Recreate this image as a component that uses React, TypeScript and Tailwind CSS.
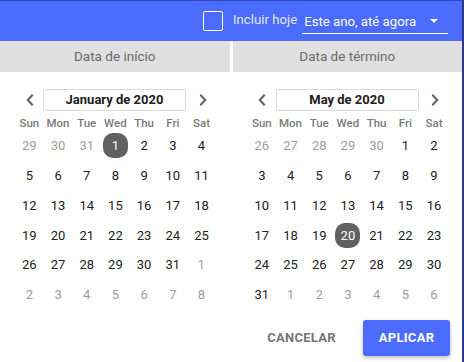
import React from "react";

function Chevron({ dir }: { dir: "l" | "r" }) {
  return (
    <svg width="10" height="12" viewBox="0 0 10 12" fill="none">
      <path
        d={dir === "l" ? "M7 1.5 L2.8 6 L7 10.5" : "M3 1.5 L7.2 6 L3 10.5"}
        stroke="#616161"
        strokeWidth="2"
        strokeLinecap="square"
      />
    </svg>
  );
}

type Day = { n: number; cur: boolean; sel?: boolean };

function Calendar({ title, days }: { title: string; days: Day[] }) {
  const weeks: Day[][] = [];
  for (let i = 0; i < days.length; i += 7) weeks.push(days.slice(i, i + 7));
  const names = ["Sun", "Mon", "Tue", "Wed", "Thu", "Fri", "Sat"];
  return (
    <div className="pl-[15px] pt-[17px]">
      <div className="flex h-[22px] items-center">
        <div className="flex w-[29px] justify-center">
          <Chevron dir="l" />
        </div>
        <div className="ml-[-1px] flex h-[22px] w-[143px] items-center justify-center rounded-[2px] border border-[#dcdcdc] text-[13px] font-bold text-[#212121]">
          {title}
        </div>
        <div className="ml-[1px] flex w-[29px] justify-center pl-[2px]">
          <Chevron dir="r" />
        </div>
      </div>
      <div className="mt-[4px] grid h-[16px] grid-cols-[repeat(7,28.7px)] items-center">
        {names.map((n) => (
          <div key={n} className="text-center text-[11.5px] font-medium text-[#7a7a7a]">
            {n}
          </div>
        ))}
      </div>
      {weeks.map((w, i) => (
        <div key={i} className="grid h-[29.8px] grid-cols-[repeat(7,28.7px)] items-center">
          {w.map((d, j) => (
            <div key={j} className="flex justify-center">
              {d.sel ? (
                <div className="flex h-[25px] w-[25px] items-center justify-center rounded-[10px] bg-[#616161] text-[13px] text-white">
                  {d.n}
                </div>
              ) : (
                <div className={"text-[13px] " + (d.cur ? "text-[#212121]" : "text-[#9e9e9e]")}>{d.n}</div>
              )}
            </div>
          ))}
        </div>
      ))}
    </div>
  );
}

function range(a: number, b: number, cur: boolean, sel?: number): Day[] {
  const r: Day[] = [];
  for (let i = a; i <= b; i++) r.push({ n: i, cur, sel: sel === i });
  return r;
}

export default function App() {
  const jan = [...range(29, 31, false), ...range(1, 31, true, 1), ...range(1, 8, false)];
  const may = [...range(26, 30, false), ...range(1, 31, true, 20), ...range(1, 6, false)];
  return (
    <div
      className="flex h-[362px] w-[464px] bg-[#2d3785]"
      style={{ fontFamily: "Roboto, 'Noto Sans', sans-serif" }}
    >
      <div className="flex w-[462px] flex-col bg-white">
        <div className="flex h-[41px] items-center border-t border-[#3246c0] bg-[#4a6bfc] pl-[203px]">
          <div className="h-[20px] w-[20px] rounded-[2px] border-[1.5px] border-white" />
          <div className="ml-[10px] pb-[2px] text-[13.2px] text-[#e3e8ff]">Incluir hoje</div>
          <div className="relative ml-[5px] flex h-[26px] w-[146px] items-center border-b border-white pl-[2px] pt-[3px] text-[13.2px] text-white">
            Este ano, até agora
            <div className="absolute right-[10px] top-[11px] h-0 w-0 border-x-[4px] border-t-[4px] border-x-transparent border-t-white" />
          </div>
        </div>
        <div className="flex h-[31px] gap-[3px]">
          <div className="flex flex-1 items-center justify-center bg-[#e0e0e0] text-[13.5px] text-[#6b6b6b]">Data de início</div>
          <div className="flex flex-1 items-center justify-center bg-[#e0e0e0] text-[13.5px] text-[#6b6b6b]">Data de término</div>
        </div>
        <div className="flex gap-[3px]">
          <div className="flex-1">
            <Calendar title="January de 2020" days={jan} />
          </div>
          <div className="flex-1">
            <Calendar title="May de 2020" days={may} />
          </div>
        </div>
        <div className="mt-[10px] flex items-center justify-end pr-[12px]">
          <div className="mr-[27px] text-[13px] font-bold tracking-[0.3px] text-[#757575]">CANCELAR</div>
          <div className="flex h-[36px] w-[87px] items-center justify-center rounded-[3px] bg-[#4a6bfc] text-[13px] font-bold tracking-[0.3px] text-white shadow-[0_2px_4px_rgba(0,0,0,0.25)]">
            APLICAR
          </div>
        </div>
      </div>
    </div>
  );
}
